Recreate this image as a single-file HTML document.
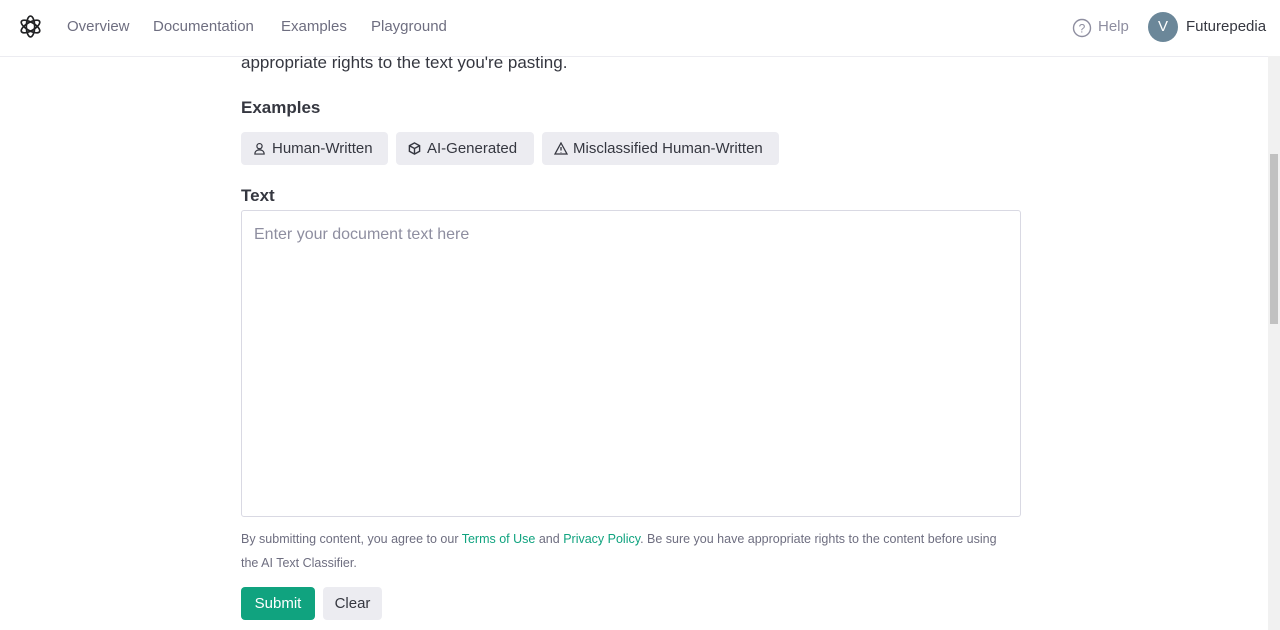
<!DOCTYPE html>
<html><head><style>
body{margin:0;width:1280px;height:630px;overflow:hidden;background:#fff;font-family:"Liberation Sans",sans-serif;color:#353740;position:relative}
.nav{position:absolute;top:0;left:0;width:1280px;height:56px;border-bottom:1px solid #ececf1;background:#fff}
.nav a{position:absolute;top:18px;font-size:15px;color:#6e6e80}
.sb{position:absolute;right:0;top:56px;width:12px;height:574px;background:#f1f1f1}
.sb div{position:absolute;left:2px;top:98px;width:8px;height:170px;background:#c1c1c1}
.btn{position:absolute;top:132px;height:33px;background:#ececf1;border-radius:4px;font-size:15px;line-height:33px;color:#353740;box-sizing:border-box;padding-left:31px}
.btn svg{position:absolute;left:12px;top:10px}
</style></head><body>
<div class="nav">
<svg style="position:absolute;left:18px;top:14px" width="25" height="25" viewBox="0 0 24 24" fill="none" stroke="#202123" stroke-width="1.6"><ellipse cx="12" cy="12" rx="4" ry="10"/><ellipse cx="12" cy="12" rx="4" ry="10" transform="rotate(60 12 12)"/><ellipse cx="12" cy="12" rx="4" ry="10" transform="rotate(120 12 12)"/></svg>
<a style="left:67px">Overview</a><a style="left:153px">Documentation</a><a style="left:281px">Examples</a><a style="left:371px">Playground</a>
<svg style="position:absolute;left:1072px;top:18px" width="20" height="20" viewBox="0 0 20 20"><circle cx="10" cy="10" r="8.5" fill="none" stroke="#8e8ea0" stroke-width="1.4"/><text x="10" y="14.5" font-size="12" text-anchor="middle" fill="#8e8ea0" font-family="Liberation Sans">?</text></svg>
<a style="left:1098px;color:#8e8ea0">Help</a>
<div style="position:absolute;left:1148px;top:12px;width:30px;height:30px;border-radius:50%;background:#6b8799;color:#fff;font-size:15px;text-align:center;line-height:30px">V</div>
<a style="left:1186px;color:#353740">Futurepedia</a>
</div>
<div style="position:absolute;left:241px;top:53px;font-size:17px;color:#353740">appropriate rights to the text you're pasting.</div>
<div style="position:absolute;left:241px;top:98px;font-size:17px;font-weight:bold;color:#353740">Examples</div>
<div class="btn" style="left:241px;width:147px"><svg width="13" height="13" viewBox="0 0 14 14" fill="none" stroke="#353740" stroke-width="1.3"><circle cx="7" cy="4.5" r="2.8"/><path d="M2 13c0-3 2.2-4.5 5-4.5s5 1.5 5 4.5z"/></svg>Human-Written</div>
<div class="btn" style="left:396px;width:138px"><svg width="13" height="13" viewBox="0 0 14 14" fill="none" stroke="#353740" stroke-width="1.5"><path d="M7 1l5.5 3v6L7 13 1.5 10V4z M1.5 4L7 7l5.5-3 M7 7v6"/></svg>AI-Generated</div>
<div class="btn" style="left:542px;width:237px"><svg width="14" height="13" viewBox="0 0 14 13" fill="none" stroke="#353740" stroke-width="1.3"><path d="M7 1L13 12H1z M7 5v3.5 M7 10v.5"/></svg>Misclassified Human-Written</div>
<div style="position:absolute;left:241px;top:186px;font-size:17px;font-weight:bold">Text</div>
<div style="position:absolute;left:241px;top:210px;width:780px;height:307px;border:1px solid #d9d9e3;border-radius:3px;box-sizing:border-box"><div style="position:absolute;left:12px;top:15px;font-size:16px;color:#8e8ea0">Enter your document text here</div></div>
<div style="position:absolute;left:241px;top:527px;font-size:12.5px;line-height:24px;color:#6e6e80;width:775px">By submitting content, you agree to our <span style="color:#10a37f">Terms of Use</span> and <span style="color:#10a37f">Privacy Policy</span>. Be sure you have appropriate rights to the content before using the AI Text Classifier.</div>
<div style="position:absolute;left:241px;top:587px;width:74px;height:33px;background:#10a37f;border-radius:4px;color:#fff;font-size:15px;text-align:center;line-height:33px">Submit</div>
<div style="position:absolute;left:323px;top:587px;width:59px;height:33px;background:#ececf1;border-radius:4px;color:#353740;font-size:15px;text-align:center;line-height:33px">Clear</div>
<div class="sb"><div></div></div>
</body></html>
